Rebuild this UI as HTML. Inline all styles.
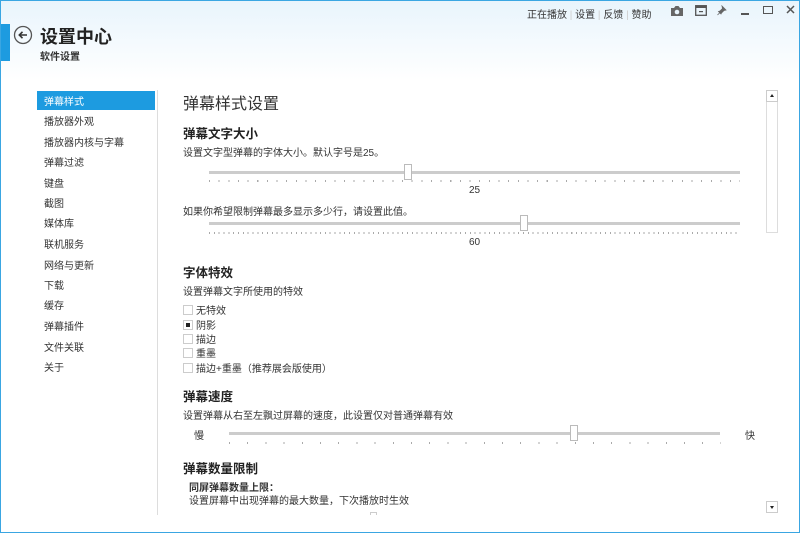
<!DOCTYPE html>
<html><head><meta charset="utf-8"><style>
*{margin:0;padding:0;box-sizing:border-box}
body{width:800px;height:533px;overflow:hidden;position:relative;background:#fff;font-family:"Liberation Sans","Noto Sans CJK SC",sans-serif;color:#333;font-size:10px}
.a{position:absolute;white-space:nowrap}
.hdr{position:absolute;left:0;top:0;width:800px;height:80px;background:linear-gradient(#e8f4fc,#fff)}
.frame{position:absolute;left:0;top:0;width:800px;height:533px;border:1px solid #3aa6e2;pointer-events:none}
.nav .a{left:44px;font-size:10px;color:#333}
.sel{position:absolute;left:37px;top:91px;width:118px;height:19px;background:#1d9be0}
.bar{position:absolute;height:3px;background:#ccc}
.thumb{position:absolute;width:8px;height:16px;background:#fff;border:1px solid #bbb}
.ticks{position:absolute;height:2px}
.cb{position:absolute;left:183px;width:10px;height:10px;border:1px solid #ccc;background:#fff}
.h2{font-size:12.5px;font-weight:bold;color:#222}
</style></head><body>
<div class="hdr"></div>
<div class="a" style="left:0;top:24px;width:10px;height:37px;background:#1d9be0"></div>
<svg class="a" style="left:13px;top:25px" width="20" height="20" viewBox="0 0 20 20"><circle cx="10" cy="10" r="8.5" fill="none" stroke="#555" stroke-width="1.3"/><path d="M14 10H6.5M9.5 6.8L6.3 10l3.2 3.2" fill="none" stroke="#333" stroke-width="1.6"/></svg>
<div class="a" style="left:40px;top:23px;font-size:18px;font-weight:bold;color:#222">设置中心</div>
<div class="a" style="left:40px;top:48px;font-size:10px;font-weight:bold;color:#333">软件设置</div>
<div class="a" style="left:527px;top:6px;font-size:10px;color:#333">正在播放<span style="color:#ccc"> | </span>设置<span style="color:#ccc"> | </span>反馈<span style="color:#ccc"> | </span>赞助</div>
<svg class="a" style="left:670px;top:5px" width="14" height="12" viewBox="0 0 14 12"><path d="M1 3h3l1.5-2h3L10 3h3v8H1z" fill="#666"/><circle cx="7" cy="7" r="2.3" fill="#e8f4fc"/></svg>
<svg class="a" style="left:695px;top:5px" width="12" height="11" viewBox="0 0 12 11"><rect x="0.7" y="0.7" width="10.6" height="9.6" fill="none" stroke="#555" stroke-width="1.3"/><rect x="1" y="1" width="10" height="2" fill="#555"/><rect x="4" y="6" width="4" height="1.2" fill="#555"/></svg>
<svg class="a" style="left:717px;top:5px" width="10" height="11" viewBox="0 0 10 11"><path d="M5 1l4 4-2 0.5-2.5 2.5L4 9 1.5 6.5 3 6l2.5-2.5z M3 7.5L0.5 10" fill="#666" stroke="#666" stroke-width="0.8"/></svg>
<div class="a" style="left:741px;top:13px;width:8px;height:1.5px;background:#555"></div>
<div class="a" style="left:763px;top:6px;width:10px;height:8px;border:1.5px solid #555"></div>
<svg class="a" style="left:786px;top:5px" width="9" height="9" viewBox="0 0 9 9"><path d="M1 1l7 7M8 1L1 8" stroke="#555" stroke-width="1.5"/></svg>

<div class="sel"></div>
<div class="a" style="left:157px;top:90px;width:1px;height:425px;background:#ddd"></div>
<div class="nav">
<div class="a" style="top:93px;color:#fff">弹幕样式</div>
<div class="a" style="top:113px">播放器外观</div>
<div class="a" style="top:134px">播放器内核与字幕</div>
<div class="a" style="top:154px">弹幕过滤</div>
<div class="a" style="top:175px">键盘</div>
<div class="a" style="top:195px">截图</div>
<div class="a" style="top:215px">媒体库</div>
<div class="a" style="top:236px">联机服务</div>
<div class="a" style="top:257px">网络与更新</div>
<div class="a" style="top:277px">下载</div>
<div class="a" style="top:297px">缓存</div>
<div class="a" style="top:318px">弹幕插件</div>
<div class="a" style="top:339px">文件关联</div>
<div class="a" style="top:359px">关于</div>
</div>

<div class="a" style="left:183px;top:90px;font-size:16px;color:#333">弹幕样式设置</div>
<div class="a h2" style="left:183px;top:123px">弹幕文字大小</div>
<div class="a" style="left:183px;top:144px">设置文字型弹幕的字体大小。默认字号是25。</div>
<div class="bar" style="left:209px;top:171px;width:531px"></div>
<div class="ticks" style="left:209px;top:180px;width:531px;background:repeating-linear-gradient(90deg,#aaa 0 1px,transparent 1px 9.65px)"></div>
<div class="thumb" style="left:404px;top:164px"></div>
<div class="a" style="left:469px;top:185px">25</div>
<div class="a" style="left:183px;top:203px">如果你希望限制弹幕最多显示多少行，请设置此值。</div>
<div class="bar" style="left:209px;top:222px;width:531px"></div>
<div class="ticks" style="left:209px;top:232px;width:531px;background:repeating-linear-gradient(90deg,#aaa 0 1px,transparent 1px 4.83px)"></div>
<div class="thumb" style="left:520px;top:215px"></div>
<div class="a" style="left:469px;top:237px">60</div>

<div class="a h2" style="left:183px;top:262px">字体特效</div>
<div class="a" style="left:183px;top:283px">设置弹幕文字所使用的特效</div>
<div class="cb" style="top:305px"></div><div class="a" style="left:196px;top:302px">无特效</div>
<div class="cb" style="top:320px"><div style="position:absolute;left:2px;top:2px;width:4px;height:4px;background:#222"></div></div><div class="a" style="left:196px;top:317px">阴影</div>
<div class="cb" style="top:334px"></div><div class="a" style="left:196px;top:331px">描边</div>
<div class="cb" style="top:348px"></div><div class="a" style="left:196px;top:345px">重墨</div>
<div class="cb" style="top:363px"></div><div class="a" style="left:196px;top:360px">描边+重墨（推荐展会版使用）</div>

<div class="a h2" style="left:183px;top:386px">弹幕速度</div>
<div class="a" style="left:183px;top:407px">设置弹幕从右至左飘过屏幕的速度，此设置仅对普通弹幕有效</div>
<div class="a" style="left:194px;top:427px">慢</div>
<div class="a" style="left:745px;top:427px">快</div>
<div class="bar" style="left:229px;top:432px;width:491px"></div>
<div class="ticks" style="left:229px;top:442px;width:492px;background:repeating-linear-gradient(90deg,#aaa 0 1px,transparent 1px 18.2px)"></div>
<div class="thumb" style="left:570px;top:425px"></div>

<div class="a h2" style="left:183px;top:458px">弹幕数量限制</div>
<div class="a" style="left:189px;top:479px;font-weight:bold">同屏弹幕数量上限：</div>
<div class="a" style="left:189px;top:492px">设置屏幕中出现弹幕的最大数量，下次播放时生效</div>
<div class="a" style="left:370px;top:512px;width:7px;height:3px;border:1px solid #ccc;border-bottom:none"></div>

<div class="a" style="left:766px;top:90px;width:12px;height:143px;border:1px solid #ddd"></div>
<div class="a" style="left:766px;top:90px;width:12px;height:12px;border:1px solid #ccc;background:#fff"><div style="position:absolute;left:3px;top:3px;border:2.5px solid transparent;border-bottom:3px solid #222;border-top:none"></div></div>
<div class="a" style="left:766px;top:501px;width:12px;height:12px;border:1px solid #ccc;background:#fff"><div style="position:absolute;left:3px;top:4px;border:2.5px solid transparent;border-top:3px solid #222;border-bottom:none"></div></div>
<div class="frame"></div>
</body></html>
